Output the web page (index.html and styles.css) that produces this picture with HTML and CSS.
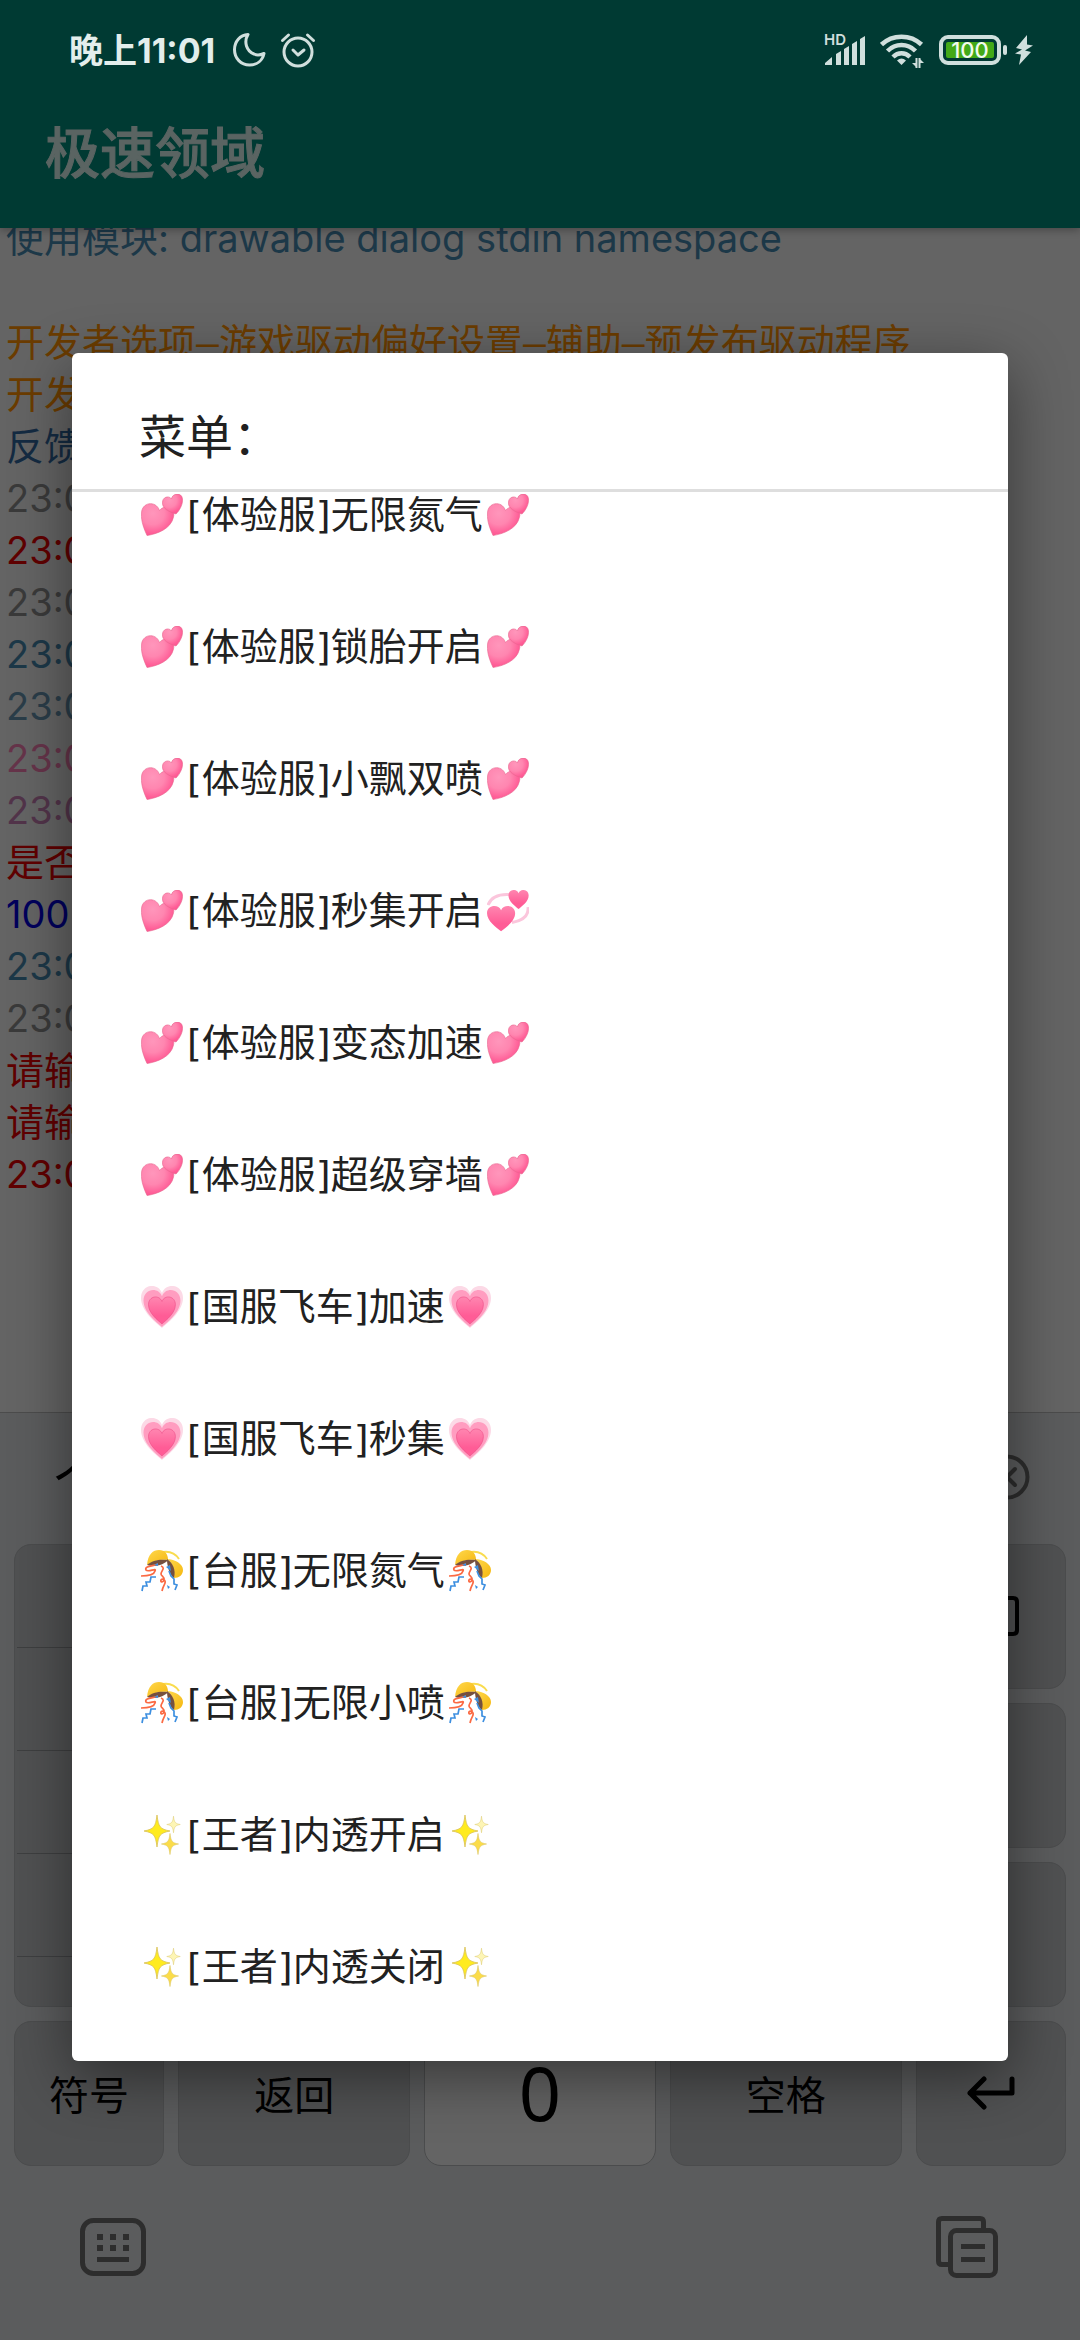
FILE: index.html
```html
<!DOCTYPE html>
<html lang="zh-CN">
<head>
<meta charset="utf-8">
<meta name="viewport" content="width=device-width, initial-scale=1">
<title>极速领域</title>
<link rel="stylesheet" href="styles.css">
</head>
<body>
<svg class="defs" width="0" height="0" aria-hidden="true">
  <defs>
    <radialGradient id="pink" cx=".35" cy=".3" r=".8"><stop offset="0" stop-color="#ff96bb"/><stop offset=".45" stop-color="#ff86b0"/><stop offset=".8" stop-color="#ff5c96"/><stop offset="1" stop-color="#f8558f"/></radialGradient>
    <linearGradient id="rose" x1="0" y1="0" x2="0" y2="1"><stop offset="0" stop-color="#ff86b0"/><stop offset=".7" stop-color="#ff5c96"/></linearGradient>
    <linearGradient id="gold" x1="0" y1="0" x2="1" y2="1"><stop offset="0" stop-color="#ffd84d"/><stop offset="1" stop-color="#f5b70f"/></linearGradient>
    <path id="heart" d="M21 42C14 36 0 25 0 12 0-2 17-4 21 7 25-4 42-2 42 12 42 25 28 36 21 42z"/>
    <path id="star" d="M0-16C1.500-4 3-2 13 0 3 2 1.500 4 0 16-1.500 4-3 2-13 0-3-2-1.500-4 0-16z"/>
    <symbol id="two-hearts" viewBox="0 0 42 42">
      <g fill="url(#pink)" stroke="#e8668f" stroke-width=".6"><path d="M6 41.500C3 35 0 27 .5 20 0 8 15 6 18.500 16.500 24 9.500 35 14 32.500 23 30 35 16 40 6 41.500z"/><path d="M35 20C28 18 21 14 21.500 9 21 3 28 1 30.500 5 31-1 41-2 41.500 5 42 10 39 16 35 20z"/></g>
    </symbol>
    <symbol id="revolving" viewBox="0 0 42 42">
      <path d="M1 15C4 7 12 4 22 4.500M41 17C42 27 34 31 25 32.500" fill="none" stroke="#fbc6dc" stroke-width="3"/>
      <g fill="url(#rose)"><use href="#heart" transform="translate(0 16) scale(.67 .6)"/><use href="#heart" transform="translate(21.500 0) scale(.48 .45)"/></g>
    </symbol>
    <symbol id="growing" viewBox="0 0 42 42">
      <use href="#heart" fill="#fcd9e6"/><use href="#heart" fill="#ff9dc0" transform="translate(2.500 4) scale(.88)"/>
      <use href="#heart" fill="url(#rose)" stroke="#ee4f87" transform="translate(7.500 11) scale(.64)"/>
    </symbol>
    <symbol id="confetti" viewBox="0 0 42 42">
      <path d="M22 2C29 1 34 3 38 9" fill="none" stroke="#f9dc4e" stroke-width="2"/>
      <path d="M6 15C7 4 12 0 18 0 24 0 27 4 27 10 19 9 12 11 6 15z" fill="url(#gold)"/>
      <path d="M6 15C11 10 19 9 27 10 24 14 14 18 6 15z" fill="#75503f"/>
      <path d="M26 9C34 9 42 14 42 20 42 25 38 28 33 28 34 20 31 13 26 9z" fill="url(#gold)"/>
      <path d="M26 9C32 13 35 20 33 28 29 26 26 17 26 9z" fill="#75503f"/>
      <g fill="none" stroke-width="1.700"><path d="M17 14C13 16 3 16 5 20c2 3 11-3 9 1-1 4-9 5-14 5M20 16c5 2 0 5 0 8 0 2 4 3 3 6s-4 2-3 0 5 0 4 3-2 3-3 8" stroke="#fb6a43"/><path d="M15 27h-5l-1 5H5l1 4H2l-1 5M28 21l2 5 3 3v5l3 1-2 5" stroke="#3d8fe0"/></g>
      <path d="M13 15l4-2v3zM25 17l4-2 1 6zM26 35l3 2-2 2z" fill="#3d8fe0"/>
    </symbol>
    <symbol id="sparkles" viewBox="0 0 42 42">
      <g stroke="#d9c25a" stroke-width=".8"><use href="#star" fill="#ffeb1f" transform="translate(16 17)"/><use href="#star" fill="#fbdc4a" transform="translate(29 30) scale(.66)"/><use href="#star" fill="#fdf5b5" transform="translate(32.500 10.500) scale(.52)"/></g>
    </symbol>
  </defs>
</svg>

<div class="screen">
  <header class="header">
    <div class="status">
      <span class="clock">晚上11:01</span>
      <svg class="moon" width="34" height="36" viewBox="0 0 34 36" fill="none" stroke="currentColor" stroke-width="3" stroke-linejoin="round"><path d="M16 2.500C8 3 2.500 9.500 2.500 17.500c0 9 6.500 15.500 15 15.500 7.500 0 13-4.500 14.500-11.500-3.500 1.500-7 2-10 .5C14.500 19 11.500 10 16 2.500z"/></svg>
      <svg class="alarm" width="36" height="36" viewBox="0 0 36 36" fill="none" stroke="currentColor" stroke-width="3" stroke-linecap="round" stroke-linejoin="round"><circle cx="18" cy="20" r="14"/><path d="M2.500 8.500l6-5.500M33.500 8.500l-6-5.500M13 18l5 5 6-5"/></svg>
      <svg class="signal" width="43" height="32" viewBox="0 0 43 32" fill="currentColor"><text x="0" y="11" class="hd">HD</text><path d="M1 31v-2l7-6v8zM12 31V20l5-3v14zM20 31v-16l5-3v19zM28 31V10l5-3v24zM36 31V5l5-3v29z"/></svg>
      <svg class="wifi" width="44" height="36" viewBox="0 0 44 36" fill="none" stroke="currentColor" stroke-width="4.500"><path d="M1.500 12.500c11-10.500 29-10.500 40 0M7.500 19c8-8 20-8 28 0M13 25c5-5 12-5 17 0"/><path d="M17 28.500q4.500-4 9 0l-4.500 4.500z" fill="currentColor" stroke="none"/><path d="M36.500 26v10M39.500 26v10" stroke-width="2"/><path d="M32 31h4v4zM40 27v4h4z" fill="currentColor" stroke="none"/></svg>
      <span class="battery"><span class="charge">100</span></span>
      <svg class="bolt" width="18" height="30" viewBox="0 0 18 30" fill="currentColor"><path d="M12 0L1 13l6 1.500-7 4 6 1L4 30l12-13-6-1.500 8-5-6-1z"/></svg>
    </div>
    <h1 class="app-title">极速领域</h1>
  </header>

  <main class="log">
    <div class="lines">
      <p class="line steel">使用模块: drawable dialog stdin namespace</p>
      <p class="line"></p>
      <p class="line orange">开发者选项<span class="dash">–</span>游戏驱动偏好设置<span class="dash">–</span>辅助<span class="dash">–</span>预发布驱动程序</p>
      <p class="line orange">开发</p>
      <p class="line navy">反馈</p>
      <p class="line grey">23:01</p>
      <p class="line red">23:01</p>
      <p class="line grey">23:01</p>
      <p class="line steel">23:01</p>
      <p class="line slate">23:01</p>
      <p class="line pink">23:01</p>
      <p class="line plum">23:01</p>
      <p class="line red">是否</p>
      <p class="line blue">100%</p>
      <p class="line steel">23:01</p>
      <p class="line grey">23:01</p>
      <p class="line red">请输</p>
      <p class="line red">请输</p>
      <p class="line red">23:01</p>
    </div>
  </main>

  <section class="keyboard" aria-label="键盘">
    <div class="candidates">
      <span>个</span>
      <button class="plain" aria-label="清除"><svg width="46" height="46" viewBox="0 0 46 46" fill="none" stroke="currentColor" stroke-width="4" stroke-linecap="round"><circle cx="23" cy="23" r="20.500"/><path d="M15 15l16 16M31 15L15 31"/></svg></button>
    </div>
    <div class="keys">
      <div class="side"><i></i><i></i><i></i><i></i><i></i></div>
      <button class="key last" aria-label="删除"><svg width="56" height="44" viewBox="0 0 56 44" fill="none" stroke="currentColor" stroke-width="4" stroke-linejoin="round"><path d="M17 4h33q4 0 4 4v28q0 4-4 4H17L3 22z"/></svg></button>
      <button class="key last" aria-label="重输"></button>
      <button class="key last" aria-label="符"></button>
      <button class="key">符号</button>
      <button class="key">返回</button>
      <button class="key zero">0</button>
      <button class="key">空格</button>
      <button class="key" aria-label="换行"><svg width="48" height="34" viewBox="0 0 48 34" fill="none" stroke="currentColor" stroke-width="5" stroke-linecap="round" stroke-linejoin="round"><path d="M17 3L3 17l14 14M3 17h42V3"/></svg></button>
    </div>
    <div class="tools">
      <button class="plain" aria-label="切换键盘"><svg width="66" height="58" viewBox="0 0 66 58" fill="none" stroke="currentColor" stroke-width="5"><rect x="2.500" y="2.500" width="61" height="53" rx="11"/><path d="M17 19h6M30 19h6M43 19h6M17 30h6M30 30h6M43 30h6" stroke-width="6"/><path d="M17 41.500h32"/></svg></button>
      <button class="plain" aria-label="剪贴板"><svg width="62" height="62" viewBox="0 0 62 62" fill="none" stroke="currentColor" stroke-width="5"><rect x="14.500" y="14.500" width="45" height="45" rx="6"/><path d="M12 48.500H6q-3.500 0-3.500-3.500V6q0-3.500 3.500-3.500h38q3.500 0 3.500 3.500v6M25 30.500h24M25 43.500h24"/></svg></button>
    </div>
  </section>
</div>

<div class="overlay">
  <div class="dialog" role="dialog" aria-labelledby="menu-title">
    <h2 class="dialog-title" id="menu-title">菜单：</h2>
    <div class="scroller">
      <ul class="menu">
        <li><button class="item"><svg class="emoji"><use href="#two-hearts"/></svg>[体验服]无限氮气<svg class="emoji"><use href="#two-hearts"/></svg></button></li>
        <li><button class="item"><svg class="emoji"><use href="#two-hearts"/></svg>[体验服]锁胎开启<svg class="emoji"><use href="#two-hearts"/></svg></button></li>
        <li><button class="item"><svg class="emoji"><use href="#two-hearts"/></svg>[体验服]小飘双喷<svg class="emoji"><use href="#two-hearts"/></svg></button></li>
        <li><button class="item"><svg class="emoji"><use href="#two-hearts"/></svg>[体验服]秒集开启<svg class="emoji"><use href="#revolving"/></svg></button></li>
        <li><button class="item"><svg class="emoji"><use href="#two-hearts"/></svg>[体验服]变态加速<svg class="emoji"><use href="#two-hearts"/></svg></button></li>
        <li><button class="item"><svg class="emoji"><use href="#two-hearts"/></svg>[体验服]超级穿墙<svg class="emoji"><use href="#two-hearts"/></svg></button></li>
        <li><button class="item"><svg class="emoji"><use href="#growing"/></svg>[国服飞车]加速<svg class="emoji"><use href="#growing"/></svg></button></li>
        <li><button class="item"><svg class="emoji"><use href="#growing"/></svg>[国服飞车]秒集<svg class="emoji"><use href="#growing"/></svg></button></li>
        <li><button class="item"><svg class="emoji"><use href="#confetti"/></svg>[台服]无限氮气<svg class="emoji"><use href="#confetti"/></svg></button></li>
        <li><button class="item"><svg class="emoji"><use href="#confetti"/></svg>[台服]无限小喷<svg class="emoji"><use href="#confetti"/></svg></button></li>
        <li><button class="item"><svg class="emoji"><use href="#sparkles"/></svg>[王者]内透开启<svg class="emoji"><use href="#sparkles"/></svg></button></li>
        <li><button class="item"><svg class="emoji"><use href="#sparkles"/></svg>[王者]内透关闭<svg class="emoji"><use href="#sparkles"/></svg></button></li>
      </ul>
    </div>
  </div>
</div>
</body>
</html>
```
FILE: styles.css
```css
* { box-sizing: border-box; }
body, h1, h2, p, ul { margin: 0; padding: 0; }
ul { list-style: none; }
body { background: #646464; font-family: Inter, "Noto Sans CJK SC", sans-serif; }
button { margin: 0; padding: 0; border: 0; background: none; font: inherit; color: inherit; }
svg { display: block; }
.defs { position: absolute; }

.screen { display: flex; flex-direction: column; height: 100vh; }

.header { position: relative; background: #003a33; box-shadow: 0 2px 8px rgba(0, 0, 0, .3); }
.status { display: flex; align-items: center; height: 80px; padding: 20px 47px 0 69px; color: #d0dfdd; }
.clock { padding-bottom: 3px; font-size: 34px; font-weight: 700; color: #e3eeec; }
.moon { margin-left: 17px; }
.alarm { margin-left: 14px; }
.signal { margin-left: auto; overflow: visible; }
.hd { font: 600 15px Inter, sans-serif; }
.wifi { margin-left: 13px; }
.battery { position: relative; display: flex; width: 62px; height: 30px; margin-left: 15px; padding: 3px; border: 4px solid; border-radius: 9px; }
.battery::after { content: ""; position: absolute; right: -10px; top: 6px; width: 4px; height: 10px; border-radius: 2px; background: #d0dfdd; }
.charge { flex: 1; display: flex; align-items: center; justify-content: center; background: #43a918; border-radius: 2px; color: #f2fbef; font-size: 22px; font-weight: 500; line-height: 16px; }
.bolt { margin-left: 14px; }
.app-title { height: 148px; padding: 0 0 2px 45px; color: #5a6462; font-size: 55px; font-weight: 500; line-height: 146px; -webkit-text-stroke: 1px #5a6462; }

.log { flex: 1; min-height: 0; overflow: hidden; }
.lines { margin-top: -16px; padding-left: 6px; }
.line { height: 52px; font-size: 38px; line-height: 52px; white-space: nowrap; }
.dash { font-family: "DejaVu Sans Mono", monospace; }
.steel { color: #1c3848; }
.slate { color: #2a3d49; }
.navy { color: #142b42; }
.orange { color: #6b3c00; }
.grey { color: #3a3a3a; }
.red { color: #600000; }
.pink { color: #66344a; }
.plum { color: #52344a; }
.blue { color: #00005c; }

.keyboard { background: #5b5c5d; border-top: 1px solid #4c4c4c; color: #000; }
.candidates { display: flex; align-items: center; justify-content: space-between; height: 131px; padding: 0 50px 4px 54px; font-size: 50px; }
.plain { color: #2d2d2d; }
.keys { display: grid; grid-template-columns: 150fr 232fr 231fr 232fr 150fr; grid-auto-rows: 145px; gap: 14px; padding: 0 14px; }
.key { display: flex; align-items: center; justify-content: center; padding-bottom: 2px; border: 1px solid #4b4c4d; border-radius: 17px; background: #505152; font-size: 40px; }
.last { grid-column: 5; }
.zero { background: #646464; font-family: "Noto Sans", sans-serif; font-size: 74px; line-height: 90px; }
.side { grid-row: 1 / 4; padding: 0 2px; border: 1px solid #4b4c4d; border-radius: 17px; background: #505152; overflow: hidden; }
.side i { display: block; height: 103px; border-bottom: 1px solid #3e3f40; }
.tools { display: flex; align-items: center; justify-content: space-between; height: 174px; padding: 0 82px 12px 80px; }

.overlay { position: absolute; inset: 0; display: flex; align-items: center; padding: 74px 72px 0; }
.dialog { flex: 1; border-radius: 6px; background: #fff; color: #212121; box-shadow: 0 16px 60px rgba(0, 0, 0, .45); overflow: hidden; }
.dialog-title { height: 136px; padding: 16px 67px 0; font-size: 47px; font-weight: 400; line-height: 136px; }
.scroller { border-top: 3px solid #dedede; overflow: hidden; }
.menu { margin-top: -43px; padding-bottom: 28px; }
.item { display: flex; align-items: center; width: 100%; height: 132px; padding: 0 65px; font-family: "DejaVu Sans", "Noto Sans CJK SC", sans-serif; font-size: 38px; line-height: 52px; text-align: left; }
.emoji { width: 42px; height: 42px; margin: 0 4px; }
```
